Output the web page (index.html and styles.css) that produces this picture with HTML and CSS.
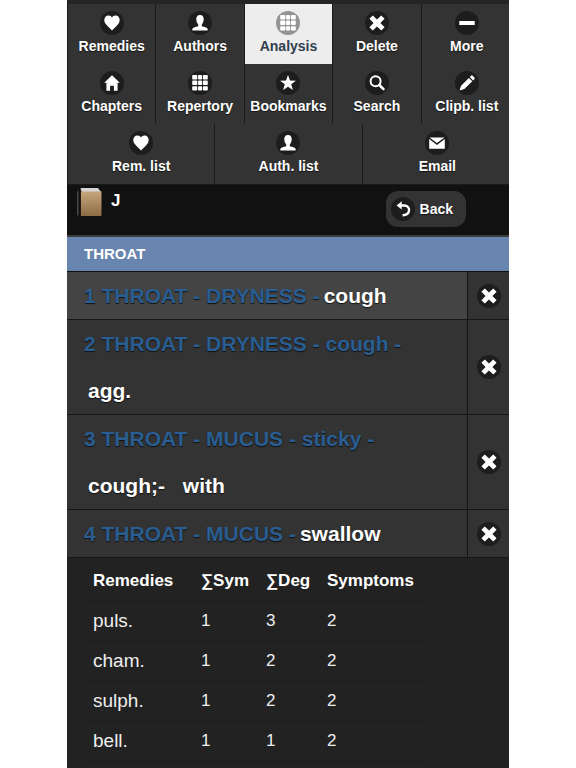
FILE: index.html
```
<!DOCTYPE html>
<html lang="en">
<head>
<meta charset="utf-8">
<meta name="viewport" content="width=device-width, initial-scale=1">
<title>Analysis</title>
<link rel="stylesheet" href="styles.css">
</head>
<body>
<svg class="sprite" aria-hidden="true">
  <symbol id="heart" viewBox="0 0 24 24"><path d="M12 19.6C10.5 17.6 7 15 5.200 12.300C3.400 9.500 4.300 5 8 4.600C9.900 4.400 11.300 5.300 12 6.600C12.700 5.300 14.100 4.400 16 4.600C19.700 5 20.600 9.500 18.800 12.300C17 15 13.500 17.600 12 19.600Z"/></symbol>
  <symbol id="user" viewBox="0 0 24 24"><path d="M12 4C14.600 4 15.700 5.800 15.700 8.200C15.700 10.600 14.800 12.200 13.800 13.300V15.200C16.500 15.900 19.700 16.500 19.700 18.200V19.500H4.300V18.200C4.300 16.500 7.500 15.900 10.200 15.200V13.300C9.200 12.200 8.300 10.600 8.300 8.200C8.300 5.800 9.400 4 12 4Z"/></symbol>
  <symbol id="grid" viewBox="0 0 24 24"><path d="M5 4h3.500q.8 0 .8.800v2.900q0 .8-.8.800H5q-.8 0-.8-.8V4.800Q4.200 4 5 4zM10.900 4h2.400q.8 0 .8.800v2.900q0 .8-.8.800h-2.400q-.8 0-.8-.8V4.800q0-.8.800-.8zM15.700 4h3.300q.8 0 .8.800v2.900q0 .8-.8.800h-3.300q-.8 0-.8-.8V4.800q0-.8.800-.8zM5 9.600h3.500q.8 0 .8.800v2.900q0 .8-.8.800H5q-.8 0-.8-.8v-2.900q0-.8.800-.8zM10.900 9.600h2.400q.8 0 .8.800v2.900q0 .8-.8.800h-2.400q-.8 0-.8-.8v-2.900q0-.8.800-.8zM15.700 9.600h3.300q.8 0 .8.800v2.900q0 .8-.8.800h-3.300q-.8 0-.8-.8v-2.900q0-.8.800-.8zM5 15.200h3.500q.8 0 .8.800v2.700q0 .8-.8.800H5q-.8 0-.8-.8V16q0-.8.800-.8zM10.900 15.200h2.400q.8 0 .8.800v2.700q0 .8-.8.800h-2.400q-.8 0-.8-.8V16q0-.8.800-.8zM15.700 15.200h3.300q.8 0 .8.800v2.700q0 .8-.8.800h-3.300q-.8 0-.8-.8V16q0-.8.800-.8z"/></symbol>
  <symbol id="delete" viewBox="0 0 24 24"><path d="M7.800 4.400L12 8.600L16.200 4.400L19.600 7.800L15.400 12L19.600 16.200L16.200 19.600L12 15.400L7.800 19.600L4.400 16.200L8.600 12L4.400 7.800Z"/></symbol>
  <symbol id="minus" viewBox="0 0 24 24"><path d="M4.300 10h15.400v4H4.300z"/></symbol>
  <symbol id="home" viewBox="0 0 24 24"><path d="M12 4.200L19.800 11.700H17.600V19.700H13.900V14.800H10.100V19.700H6.400V11.700H4.200Z"/></symbol>
  <symbol id="star" viewBox="0 0 24 24"><path d="M12 4L14 9.500L19.900 9.700L15.200 13.300L16.900 19L12 15.700L7.100 19L8.800 13.300L4.100 9.700L10 9.500Z"/></symbol>
  <symbol id="search" viewBox="0 0 24 24"><circle cx="10.600" cy="10.300" r="5" fill="none" stroke="#fff" stroke-width="2"/><path d="M14.300 14L18.500 18.200" stroke="#fff" stroke-width="2.600" stroke-linecap="round"/></symbol>
  <symbol id="pencil" viewBox="0 0 24 24"><path d="M4.500 19.500L6.100 14.700L13.900 6.900L17.300 10.300L9.400 18.100ZM14.800 6L16.300 4.500Q17 4 17.700 4.700L19.400 6.400Q20.100 7.100 19.500 8L18.100 9.400Z"/></symbol>
  <symbol id="mail" viewBox="0 0 24 24"><path d="M4.500 6.400H19.500L12 12ZM4.200 8L12 13.900L19.800 8V17.700H4.200Z"/></symbol>
  <symbol id="back" viewBox="0 0 24 24"><path d="M5.600 8.400L10.700 4.300V12.500Z"/><path d="M9 8.500H13.200C19.800 8.500 20.200 17.800 11.600 18.300" fill="none" stroke="#fff" stroke-width="2.400"/></symbol>
</svg>
<div class="app">
  <nav class="menu" aria-label="Main">
    <div class="menu-row">
      <a class="item" href="#remedies"><svg class="icon"><use href="#heart"/></svg>Remedies</a>
      <a class="item" href="#authors"><svg class="icon"><use href="#user"/></svg>Authors</a>
      <a class="item active" href="#analysis" aria-current="page"><svg class="icon"><use href="#grid"/></svg>Analysis</a>
      <a class="item" href="#delete-all"><svg class="icon"><use href="#delete"/></svg>Delete</a>
      <a class="item" href="#more"><svg class="icon"><use href="#minus"/></svg>More</a>
    </div>
    <div class="menu-row">
      <a class="item" href="#chapters"><svg class="icon"><use href="#home"/></svg>Chapters</a>
      <a class="item" href="#repertory"><svg class="icon"><use href="#grid"/></svg>Repertory</a>
      <a class="item" href="#bookmarks"><svg class="icon"><use href="#star"/></svg>Bookmarks</a>
      <a class="item" href="#find"><svg class="icon"><use href="#search"/></svg>Search</a>
      <a class="item" href="#clipboard"><svg class="icon"><use href="#pencil"/></svg>Clipb. list</a>
    </div>
    <div class="menu-row">
      <a class="item" href="#rem-list"><svg class="icon"><use href="#heart"/></svg>Rem. list</a>
      <a class="item" href="#auth-list"><svg class="icon"><use href="#user"/></svg>Auth. list</a>
      <a class="item" href="#email"><svg class="icon"><use href="#mail"/></svg>Email</a>
    </div>
  </nav>
  <header class="bar">
    <svg class="book" viewBox="0 0 26 30" aria-hidden="true">
      <defs>
        <linearGradient id="cover" x1="0" y1="0" x2="0" y2="1"><stop offset="0" stop-color="#c8a67c"/><stop offset="1" stop-color="#8d6c45"/></linearGradient>
        <linearGradient id="spine" x1="0" y1="0" x2="1" y2="0"><stop offset="0" stop-color="#555"/><stop offset=".5" stop-color="#111"/><stop offset="1" stop-color="#3a2a18"/></linearGradient>
      </defs>
      <path d="M4 1H21L24 5H2Z" fill="#d4d4d4"/>
      <path d="M0 5L3 1L5 5V29H2Q0 29 0 27Z" fill="url(#spine)"/>
      <path d="M4 4.500H24.500V28Q24.500 29 23.500 29H4Z" fill="url(#cover)"/>
    </svg>
    <h1 class="title">J</h1>
    <button class="back" type="button"><svg class="icon"><use href="#back"/></svg>Back</button>
  </header>
  <main>
    <h2 class="divider">THROAT</h2>
    <ul class="rubrics">
      <li class="rubric current">
        <a class="rubric-link" href="#r1">1 THROAT - DRYNESS -<span class="word">cough</span></a>
        <button class="remove" type="button" aria-label="Delete 1"><svg class="icon"><use href="#delete"/></svg></button>
      </li>
      <li class="rubric">
        <a class="rubric-link" href="#r2">2 THROAT - DRYNESS - cough - <span class="line"><span class="word">agg.</span></span></a>
        <button class="remove" type="button" aria-label="Delete 2"><svg class="icon"><use href="#delete"/></svg></button>
      </li>
      <li class="rubric">
        <a class="rubric-link" href="#r3">3 THROAT - MUCUS - sticky - <span class="line"><span class="word">cough;-</span> <span class="word spaced">with</span></span></a>
        <button class="remove" type="button" aria-label="Delete 3"><svg class="icon"><use href="#delete"/></svg></button>
      </li>
      <li class="rubric">
        <a class="rubric-link" href="#r4">4 THROAT - MUCUS -<span class="word">swallow</span></a>
        <button class="remove" type="button" aria-label="Delete 4"><svg class="icon"><use href="#delete"/></svg></button>
      </li>
    </ul>
    <table class="results">
      <thead>
        <tr><th class="name">Remedies</th><th class="sym">∑Sym</th><th class="deg">∑Deg</th><th class="all">Symptoms</th></tr>
      </thead>
      <tbody>
        <tr><td class="name">puls.</td><td>1</td><td>3</td><td>2</td></tr>
        <tr><td class="name">cham.</td><td>1</td><td>2</td><td>2</td></tr>
        <tr><td class="name">sulph.</td><td>1</td><td>2</td><td>2</td></tr>
        <tr><td class="name">bell.</td><td>1</td><td>1</td><td>2</td></tr>
      </tbody>
    </table>
  </main>
</div>
</body>
</html>
```
FILE: styles.css
```
* { box-sizing: border-box; }

body {
  margin: 0;
  background: #fff;
  color: #fff;
  font-family: "Liberation Sans", Helvetica, Arial, sans-serif;
  text-shadow: 0 1px 1px #111;
}

a { color: inherit; text-decoration: none; }

button {
  margin: 0;
  padding: 0;
  border: 0;
  color: inherit;
  font: inherit;
  text-shadow: inherit;
}

.sprite { position: absolute; width: 0; height: 0; }

.app {
  max-width: 442px;
  min-height: 100vh;
  margin: 0 auto;
  background: #222;
}

.icon {
  flex: none;
  width: 24px;
  height: 24px;
  border-radius: 50%;
  background: #1d1d1d;
  fill: #fff;
}

.menu { padding-top: 4px; background: #252525; }

.menu-row {
  display: grid;
  grid-auto-columns: minmax(0, 1fr);
  grid-auto-flow: column;
  background: #333;
}

.item {
  display: flex;
  flex-direction: column;
  align-items: center;
  gap: 3px;
  height: 60px;
  padding-top: 7px;
  border-left: 1px solid #1a1a1a;
  font-size: 14px;
  font-weight: bold;
  line-height: 17px;
  white-space: nowrap;
}

.item:last-child { padding-left: 3px; }

.item.active { background: #ededed; color: #2f3e50; text-shadow: none; }

.active .icon { background: #949494; }

.bar {
  display: flex;
  align-items: flex-start;
  height: 53px;
  padding: 2px 43px 0 10px;
  border-top: 1px solid #1a1a1a;
  border-bottom: 2px solid #3c3c3c;
  background: #111;
}

.book { width: 26px; height: 30px; }

.title {
  flex: 1;
  margin: 4px 0 0 8px;
  font-size: 17px;
  line-height: 20px;
}

.back {
  display: flex;
  align-items: center;
  gap: 5px;
  height: 36px;
  margin-top: 4px;
  padding: 0 13px 0 5px;
  border-radius: 12px;
  background: #333;
  font-size: 14px;
  font-weight: bold;
}

.divider {
  margin: 0;
  padding: 0 17px;
  border-bottom: 1px solid #111;
  background: #6785ae;
  font-size: 15px;
  line-height: 34px;
  text-shadow: none;
}

.rubrics { margin: 0; padding: 0; list-style: none; }

.rubric {
  display: flex;
  border-bottom: 1px solid #161616;
  background: #333;
}

.rubric-link {
  flex: 1;
  padding-left: 17px;
  border-right: 1px solid #161616;
  color: #2a5d91;
  font-size: 21px;
  font-weight: bold;
  line-height: 47px;
}

.current .rubric-link { background: #444; }

.line { display: block; }

.word { margin-left: 4px; color: #fff; }

.spaced { margin-left: 12px; }

.remove {
  display: flex;
  align-items: center;
  justify-content: center;
  width: 41px;
  background: none;
}

.results {
  margin: 3px 17px 0;
  border-collapse: collapse;
  font-size: 17px;
  text-align: left;
  text-shadow: none;
}

.results th,
.results td {
  height: 40px;
  padding: 0 0 0 9px;
  border-bottom: 1px solid #1c1c1c;
}

.results td { color: #eee; }

.results td.name { font-size: 19px; }

.results th.name { width: 108px; }

.results .sym { width: 65px; }

.results .deg { width: 61px; }

.results .all { width: 106px; }
```
